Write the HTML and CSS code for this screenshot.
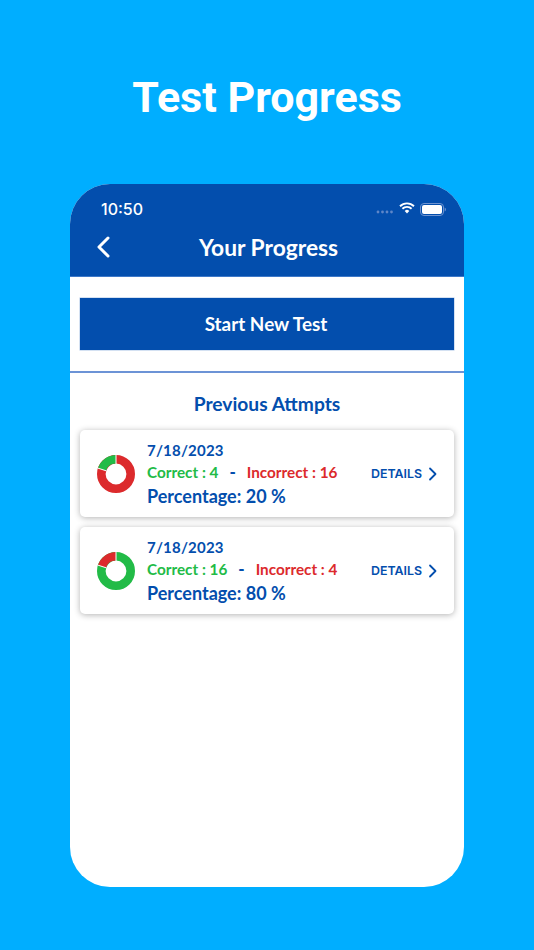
FILE: index.html
```html
<!DOCTYPE html>
<html lang="en">
<head>
<meta charset="utf-8">
<title>Test Progress</title>
<link rel="stylesheet" href="styles.css">
</head>
<body>
<main class="page">
  <h1 class="title">Test Progress</h1>
  <section class="phone">
    <header class="header">
      <div class="status">
        <span class="time">10:50</span>
        <span class="status-icons">
          <svg class="signal" width="18" height="4" viewBox="0 0 18 4"><g fill="#5f86c8"><circle cx="2" cy="2" r="1.4"/><circle cx="6.5" cy="2" r="1.4"/><circle cx="11" cy="2" r="1.4"/><circle cx="15.5" cy="2" r="1.4"/></g></svg>
          <svg class="wifi" width="16" height="12" viewBox="0 0 16 12"><path d="M1 4.2a10 10 0 0 1 14 0M3.4 6.7a6.6 6.6 0 0 1 9.2 0" fill="none" stroke="#fff" stroke-width="1.9"/><path d="M5.7 8.9a3.3 3.3 0 0 1 4.6 0L8 11.4z" fill="#fff"/></svg>
          <svg class="battery" width="26" height="13" viewBox="0 0 26 13"><rect x=".5" y=".5" width="23" height="12" rx="3.5" fill="none" stroke="#6e93d0"/><rect x="2" y="2" width="20" height="9" rx="2" fill="#fff"/><path d="M24.6 4.6a2 2 0 0 1 0 3.8z" fill="#6e93d0"/></svg>
        </span>
      </div>
      <div class="nav">
        <svg class="back" width="14" height="22" viewBox="0 0 14 22"><path d="M12 2 3 11l9 9" fill="none" stroke="#fff" stroke-width="3" stroke-linecap="round" stroke-linejoin="round"/></svg>
        <span class="nav-title">Your Progress</span>
      </div>
    </header>
    <div class="action">
      <button class="start">Start New Test</button>
    </div>
    <h2 class="section-title">Previous Attmpts</h2>
    <div class="cards">
      <article class="card">
        <svg class="donut" width="38" height="38" viewBox="0 0 38 38">
          <circle class="ring-red" cx="19" cy="19" r="14.7"/>
          <path class="arc-green" d="M19 4.3A14.7 14.7 0 0 0 5.02 14.46"/>
          <path class="tick" d="M19 0V10.3M.93 13.13 9.2 15.82"/>
        </svg>
        <div class="info">
          <div class="date">7/18/2023</div>
          <div class="score"><span class="correct">Correct : 4</span><span class="dash">-</span><span class="incorrect">Incorrect : 16</span></div>
          <div class="percent">Percentage: 20 %</div>
        </div>
        <a class="details">DETAILS<svg width="10" height="14" viewBox="0 0 10 14"><path d="M2 1.5 7.5 7 2 12.5" fill="none" stroke="#034ead" stroke-width="1.8" stroke-linecap="round" stroke-linejoin="round"/></svg></a>
      </article>
      <article class="card">
        <svg class="donut" width="38" height="38" viewBox="0 0 38 38">
          <circle class="ring-green" cx="19" cy="19" r="14.7"/>
          <path class="arc-red" d="M19 4.3A14.7 14.7 0 0 0 5.02 14.46"/>
          <path class="tick" d="M19 0V10.3M.93 13.13 9.2 15.82"/>
        </svg>
        <div class="info">
          <div class="date">7/18/2023</div>
          <div class="score"><span class="correct">Correct : 16</span><span class="dash">-</span><span class="incorrect">Incorrect : 4</span></div>
          <div class="percent">Percentage: 80 %</div>
        </div>
        <a class="details">DETAILS<svg width="10" height="14" viewBox="0 0 10 14"><path d="M2 1.5 7.5 7 2 12.5" fill="none" stroke="#034ead" stroke-width="1.8" stroke-linecap="round" stroke-linejoin="round"/></svg></a>
      </article>
    </div>
  </section>
</main>
</body>
</html>
```
FILE: styles.css
```css
* { box-sizing: border-box; }
html, body { margin: 0; height: 100%; }
body { background: #00aeff; font-family: "Lato", "Liberation Sans", sans-serif; overflow: hidden; }
.page { width: 534px; height: 950px; padding: 0 70px; display: flex; flex-direction: column; }
.title { margin: 70px 0 0; height: 114px; text-align: center; color: #fff; font: 700 43px/55px "Roboto", sans-serif; }
.phone { height: 703px; background: #fff; border-radius: 40px; overflow: hidden; }
.header { height: 93px; background: #034ead; border-bottom: 1px solid #3d78c8; color: #fff; }
.status { height: 47px; padding: 3px 18px 0 31px; display: flex; justify-content: space-between; align-items: center; }
.time { font: 500 16px/20px "Inter", sans-serif; }
.status-icons { display: flex; align-items: center; gap: 5px; }
.signal { margin-top: 6px; }
.wifi { margin-top: -2px; }
.nav { position: relative; height: 34px; display: flex; align-items: center; justify-content: center; }
.back { position: absolute; left: 26px; top: 5px; }
.nav-title { font-size: 22.8px; line-height: 30px; font-weight: 700; margin: -2px 0 0 3px; }
.action { height: 96px; padding: 21px 10px 0; border-bottom: 2px solid #6c93d6; }
.start { display: block; width: 100%; height: 52px; border: 0; padding: 0 2px 0 0; background: #034ead; box-shadow: 0 0 0 0.5px #a9c4e6; color: #fff; font: 700 18.9px/22px "Lato", sans-serif; }
.section-title { margin: 0; height: 57px; padding-top: 20px; text-align: center; color: #034ead; font-size: 19.2px; line-height: 22px; font-weight: 700; }
.cards { padding: 0 10px; display: flex; flex-direction: column; gap: 10px; }
.card { height: 87px; background: #fff; border-radius: 5px; box-shadow: 0 1px 6px rgba(0,0,0,.3); display: flex; align-items: center; padding: 0 16px 0 17px; }
.donut { flex: none; margin: 1px 12px 0 0; }
.donut circle, .donut .arc-green, .donut .arc-red { fill: none; stroke-width: 8.6; }
.ring-red, .arc-red { stroke: #dc2a2c; }
.ring-green, .arc-green { stroke: #22bb47; }
.tick { stroke: #fff; stroke-width: 1; fill: none; }
.info { flex: 1; min-width: 0; }
.date { color: #034ead; font-size: 15px; line-height: 18px; font-weight: 700; letter-spacing: .2px; }
.score { margin-top: 4px; font-size: 15.3px; line-height: 18px; font-weight: 700; display: flex; }
.correct { color: #22bb47; }
.dash { color: #034ead; margin: 0 11px; font-size: 17px; font-weight: 900; }
.incorrect { color: #dc2a2c; }
.percent { margin-top: 4px; color: #034ead; font-size: 18px; line-height: 22px; font-weight: 700; }
.details { flex: none; display: flex; align-items: center; gap: 6px; color: #034ead; font: 600 12.4px/16px "Inter", sans-serif; }
```
